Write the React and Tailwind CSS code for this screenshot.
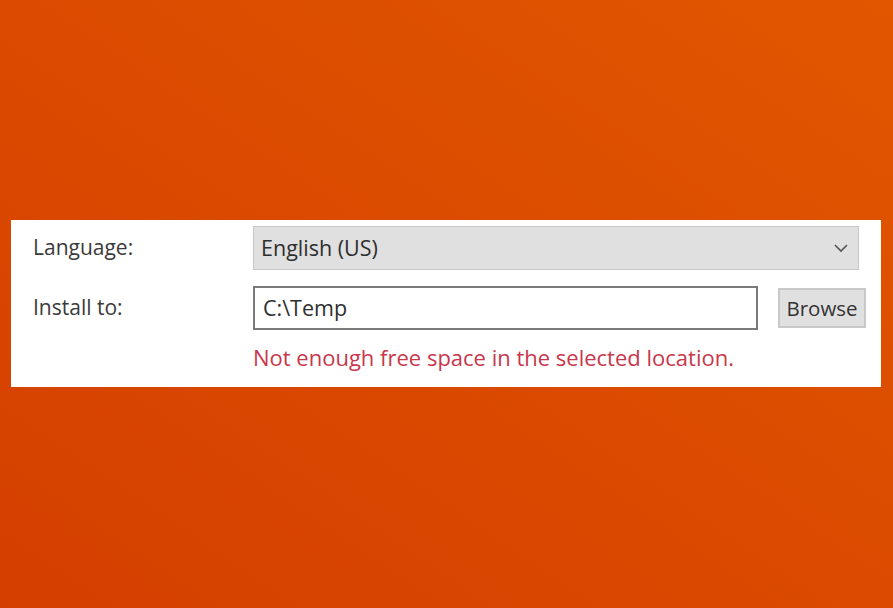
export default function App() {
  return (
    <div
      className="w-[893px] h-[608px] overflow-hidden bg-linear-to-tr from-[#d43f00] via-[#db4a00] to-[#e15700] pt-[220px] pl-[11px]"
      style={{ fontFamily: '"Open Sans", "Noto Sans", sans-serif' }}
    >
      <div className="w-[870px] h-[167px] bg-white pl-[22px] pt-[6px] pr-[15px]">
        <div className="flex items-center h-[44px]">
          <div className="w-[220px] shrink-0 text-[21px] text-[#3a3a3a]">Language:</div>
          <div className="w-[606px] shrink-0 h-[44px] bg-[#e0e0e0] border border-[#c6c6c6] flex items-center justify-between pl-[7px] pr-[9px]">
            <span className="text-[21.5px] text-[#2e2e2e]">English (US)</span>
            <svg width="16" height="10" viewBox="0 0 16 10" fill="none" stroke="#555" strokeWidth="1.6">
              <path d="M2 2l6 6 6-6" />
            </svg>
          </div>
        </div>
        <div className="flex items-center h-[44px] mt-[16px]">
          <div className="w-[220px] shrink-0 text-[21px] text-[#3a3a3a]">Install to:</div>
          <div className="w-[505px] shrink-0 h-[44px] border-2 border-[#7a7a7a] flex items-center pl-[8px]">
            <span className="text-[21.5px] text-[#2e2e2e]">C:\Temp</span>
          </div>
          <button className="ml-[20px] shrink-0 w-[88px] h-[40px] bg-[#e0e0e0] border-2 border-[#c8c8c8] text-[20.5px] text-[#333] flex items-center justify-center">
            Browse
          </button>
        </div>
        <div className="pl-[220px] mt-[12px] text-[22px] leading-[30px] text-[#c8374c]">
          Not enough free space in the selected location.
        </div>
      </div>
    </div>
  );
}
